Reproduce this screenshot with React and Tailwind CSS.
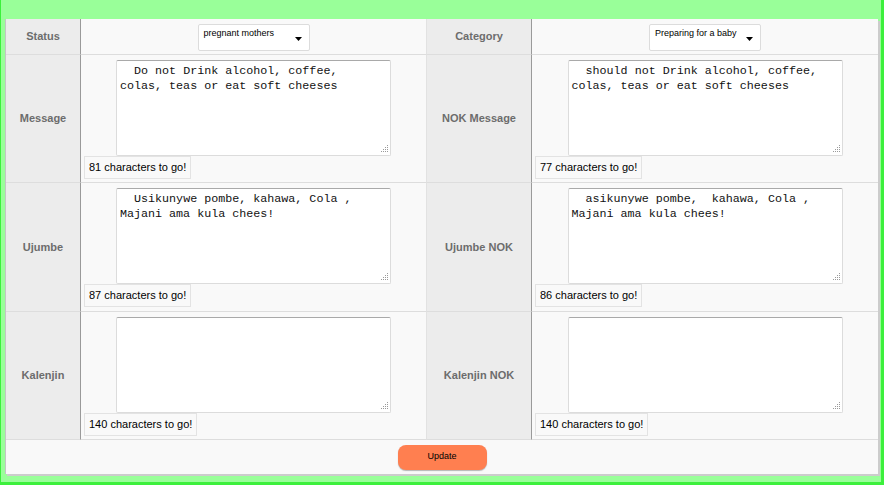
const rows = [
  {
    left: "Message",
    leftText: "  Do not Drink alcohol, coffee, colas, teas or eat soft cheeses",
    leftLeft: 81,
    right: "NOK Message",
    rightText: "  should not Drink alcohol, coffee, colas, teas or eat soft cheeses",
    rightLeft: 77,
  },
  {
    left: "Ujumbe",
    leftText: "  Usikunywe pombe, kahawa, Cola , Majani ama kula chees!",
    leftLeft: 87,
    right: "Ujumbe NOK",
    rightText: "  asikunywe pombe,  kahawa, Cola , Majani ama kula chees!",
    rightLeft: 86,
  },
  {
    left: "Kalenjin",
    leftText: "",
    leftLeft: 140,
    right: "Kalenjin NOK",
    rightText: "",
    rightLeft: 140,
  },
];

function Label({ children, divider }) {
  return (
    <div
      className={`flex items-center justify-center border-b border-r border-b-[#dddddd] border-r-[#9a9a9a] bg-[#ececec] text-center text-[11px] font-bold text-[#6c6c6c] ${
        divider ? "border-l border-l-[#e2e2e2]" : ""
      }`}
    >
      {children}
    </div>
  );
}

function FakeSelect({ value }) {
  return (
    <div className="flex h-[27px] w-[112px] justify-between rounded-[2px] border border-[#dcdcdc] bg-white pl-[5px] pr-[7px] pt-[3px]">
      <span className="text-[9px] leading-[11px] text-black">{value}</span>
      <svg width="7" height="4" viewBox="0 0 7 4" className="mt-[9px]">
        <path d="M0 0h7L3.5 4z" fill="#000" />
      </svg>
    </div>
  );
}

function MessageBox({ text, left }) {
  return (
    <div className="flex flex-col items-center pt-[5px]">
      <div className="relative">
        <textarea
          defaultValue={text}
          className="block h-[96px] w-[275px] resize-none rounded-[2px] border border-[#dcdcdc] border-t-[#a9a9a9] bg-white pl-[3px] pr-[8px] pt-[3px] font-['Liberation_Mono','Courier_New',monospace] text-[11.7px] leading-[15px] text-[#111] outline-none"
        />
        <svg
          width="7"
          height="7"
          viewBox="0 0 7 7"
          className="pointer-events-none absolute bottom-[4px] right-[3px]"
        >
          <g fill="#9a9a9a">
            <rect x="6" y="0" width="1" height="1" />
            <rect x="4" y="2" width="1" height="1" />
            <rect x="6" y="2" width="1" height="1" />
            <rect x="2" y="4" width="1" height="1" />
            <rect x="4" y="4" width="1" height="1" />
            <rect x="6" y="4" width="1" height="1" />
            <rect x="0" y="6" width="1" height="1" />
            <rect x="2" y="6" width="1" height="1" />
            <rect x="4" y="6" width="1" height="1" />
            <rect x="6" y="6" width="1" height="1" />
          </g>
        </svg>
      </div>
      <div className="ml-[3px] self-start border border-[#e3e3e3] bg-[#f9f9f9] px-[4px] text-[11px] leading-[21px] text-black">
        {left} characters to go!
      </div>
    </div>
  );
}

export default function App() {
  return (
    <div className="h-[485px] w-full overflow-hidden border-b-[3px] border-l border-r-[3px] border-[#3cf03c] bg-[#99ff99] pl-[4px] pt-[19px] font-['Liberation_Sans',Arial,sans-serif]">
      <div className="grid w-[873px] grid-cols-[75px_345px_106px_346px] grid-rows-[36px_128px_129px_128px_34px] border-l border-[#c4c4c4] shadow-[2px_2px_0_#cccccc]">
        <Label>Status</Label>
        <div className="flex justify-center border-b border-[#dddddd] bg-[#f9f9f9] pt-[5px]">
          <FakeSelect value="pregnant mothers" />
        </div>
        <Label divider>Category</Label>
        <div className="flex justify-center border-b border-[#dddddd] bg-[#f9f9f9] pt-[5px]">
          <FakeSelect value="Preparing for a baby" />
        </div>

        {rows.map((row) => (
          <div key={row.left} className="contents">
            <Label>{row.left}</Label>
            <div className="border-b border-[#dddddd] bg-[#f9f9f9]">
              <MessageBox text={row.leftText} left={row.leftLeft} />
            </div>
            <Label divider>{row.right}</Label>
            <div className="border-b border-[#dddddd] bg-[#f9f9f9]">
              <MessageBox text={row.rightText} left={row.rightLeft} />
            </div>
          </div>
        ))}

        <div className="col-span-4 flex items-center justify-center bg-[#f9f9f9]">
          <button
            type="button"
            className="h-[25px] w-[89px] rounded-[8px] bg-[#ff7f50] text-[9px] text-black shadow-[0_1px_1px_#b5b5b5]"
          >
            Update
          </button>
        </div>
      </div>
    </div>
  );
}
